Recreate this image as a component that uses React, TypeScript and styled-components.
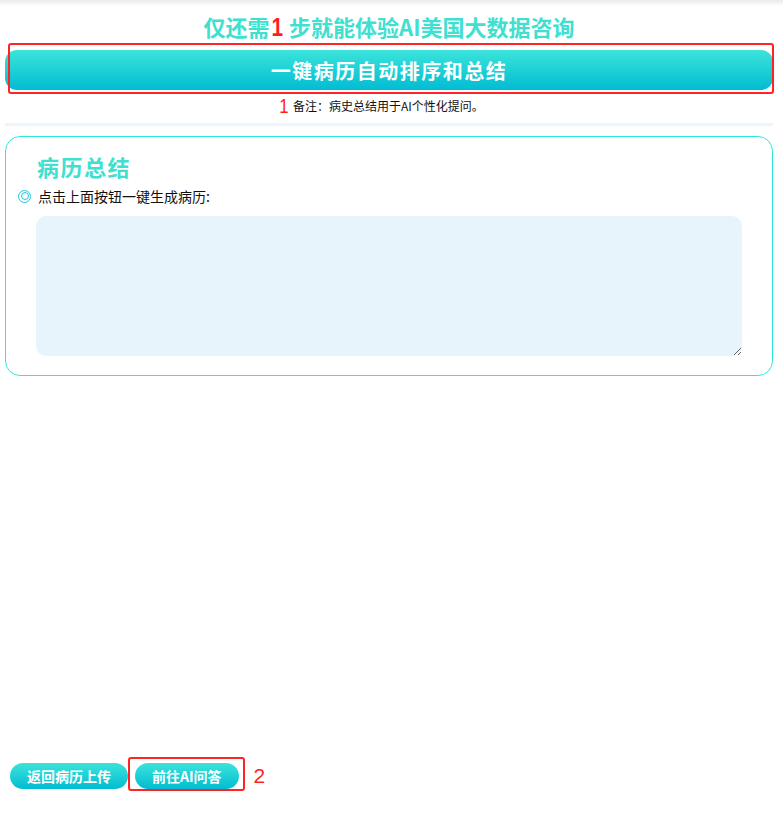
import React from "react";
import styled, { createGlobalStyle } from "styled-components";

const Global = createGlobalStyle`
  html, body { margin: 0; padding: 0; background: #fff; }
  body { font-family: "Noto Sans CJK SC", "Liberation Sans", sans-serif; }
  * { box-sizing: border-box; }
`;

const Page = styled.div`
  min-height: 100vh;
  display: flex;
  flex-direction: column;
  background: linear-gradient(#e9e9e9 0px, #ffffff 6px);
  padding: 11px 10px 30px 5px;
`;

const Headline = styled.h1`
  margin: 0;
  height: 30px;
  text-align: center;
  font-size: 22px;
  line-height: 30px;
  font-weight: 700;
  color: #40e0d0;
`;

const RedNum = styled.span<{ $size: number; $bold?: boolean; $gap: number }>`
  display: inline-block;
  line-height: 1;
  color: #ff1f1f;
  font-family: "Liberation Sans", sans-serif;
  font-size: ${(p) => p.$size}px;
  font-weight: ${(p) => (p.$bold ? 700 : 400)};
  transform: scaleX(0.8);
  margin: 0 ${(p) => p.$gap}px 0 0;
`;

const Marked = styled.div`
  position: relative;
`;

const RedFrame = styled.div<{ $t: number; $r: number; $b: number; $l: number }>`
  position: absolute;
  top: ${(p) => p.$t}px;
  right: ${(p) => p.$r}px;
  bottom: ${(p) => p.$b}px;
  left: ${(p) => p.$l}px;
  border: 2px solid #ff2424;
  border-radius: 3px;
  pointer-events: none;
`;

const BigButton = styled.button`
  display: block;
  width: 100%;
  height: 40px;
  margin-top: 9px;
  border: none;
  border-radius: 12px;
  background: linear-gradient(#3be4da, #02bcd2);
  color: #fff;
  font-family: inherit;
  font-size: 20px;
  font-weight: 700;
  letter-spacing: 1.5px;
`;

const Note = styled.div`
  margin-top: 5px;
  height: 20px;
  display: flex;
  align-items: center;
  justify-content: center;
  padding-right: 16px;
  font-size: 12px;
  color: #111;
`;

const Divider = styled.hr`
  margin: 8px 0 0;
  border: none;
  height: 3px;
  background: #eaf5fc;
`;

const Card = styled.section`
  margin-top: 10px;
  border: 1px solid #2ee8dc;
  border-radius: 15px;
  padding: 14px 30px 19px 12px;
`;

const CardTitle = styled.h2`
  margin: 0 0 0 19px;
  font-size: 22px;
  line-height: 30px;
  font-weight: 700;
  color: #40e0d0;
  letter-spacing: 1.5px;
`;

const Hint = styled.div`
  display: flex;
  align-items: center;
  gap: 7px;
  height: 20px;
  margin-top: 5px;
  font-size: 14px;
  color: #111;
`;

const Ring = styled.span`
  width: 13px;
  height: 13px;
  border-radius: 50%;
  border: 1.5px solid #22c8dc;
  display: inline-flex;
  align-items: center;
  justify-content: center;
  &::after {
    content: "";
    width: 6px;
    height: 6px;
    border-radius: 50%;
    border: 1.5px solid #22c8dc;
  }
`;

const Summary = styled.textarea`
  display: block;
  width: calc(100% - 18px);
  margin: 10px 0 0 18px;
  height: 140px;
  border: none;
  border-radius: 10px;
  background: #e8f4fc;
  outline: none;
  font-family: inherit;
`;

const Footer = styled.div`
  margin-top: auto;
  display: flex;
  align-items: center;
  gap: 7px;
  padding-left: 5px;
`;

const PillButton = styled.button`
  height: 26px;
  padding: 0 17px;
  border: none;
  border-radius: 13px;
  background: linear-gradient(#3be4da, #02bcd2);
  color: #fff;
  font-family: inherit;
  font-size: 14px;
  font-weight: 700;
  white-space: nowrap;
`;

const StepTwo = styled.span`
  margin-left: 8px;
  color: #ff1f1f;
  font-family: "Liberation Sans", sans-serif;
  font-size: 21px;
`;

export default function App() {
  return (
    <>
      <Global />
      <Page>
        <Headline>
          仅还需<RedNum $size={26} $bold $gap={5}>1</RedNum>步就能体验AI美国大数据咨询
        </Headline>
        <Marked>
          <BigButton>一键病历自动排序和总结</BigButton>
          <RedFrame $t={2} $r={-1} $b={-4} $l={3} />
        </Marked>
        <Note>
          <RedNum $size={21} $gap={3}>1</RedNum>备注：病史总结用于AI个性化提问。
        </Note>
        <Divider />
        <Card>
          <CardTitle>病历总结</CardTitle>
          <Hint>
            <Ring />
            点击上面按钮一键生成病历:
          </Hint>
          <Summary />
        </Card>
        <Footer>
          <PillButton>返回病历上传</PillButton>
          <Marked>
            <PillButton>前往AI问答</PillButton>
            <RedFrame $t={-6} $r={-6} $b={-2} $l={-7} />
          </Marked>
          <StepTwo>2</StepTwo>
        </Footer>
      </Page>
    </>
  );
}
